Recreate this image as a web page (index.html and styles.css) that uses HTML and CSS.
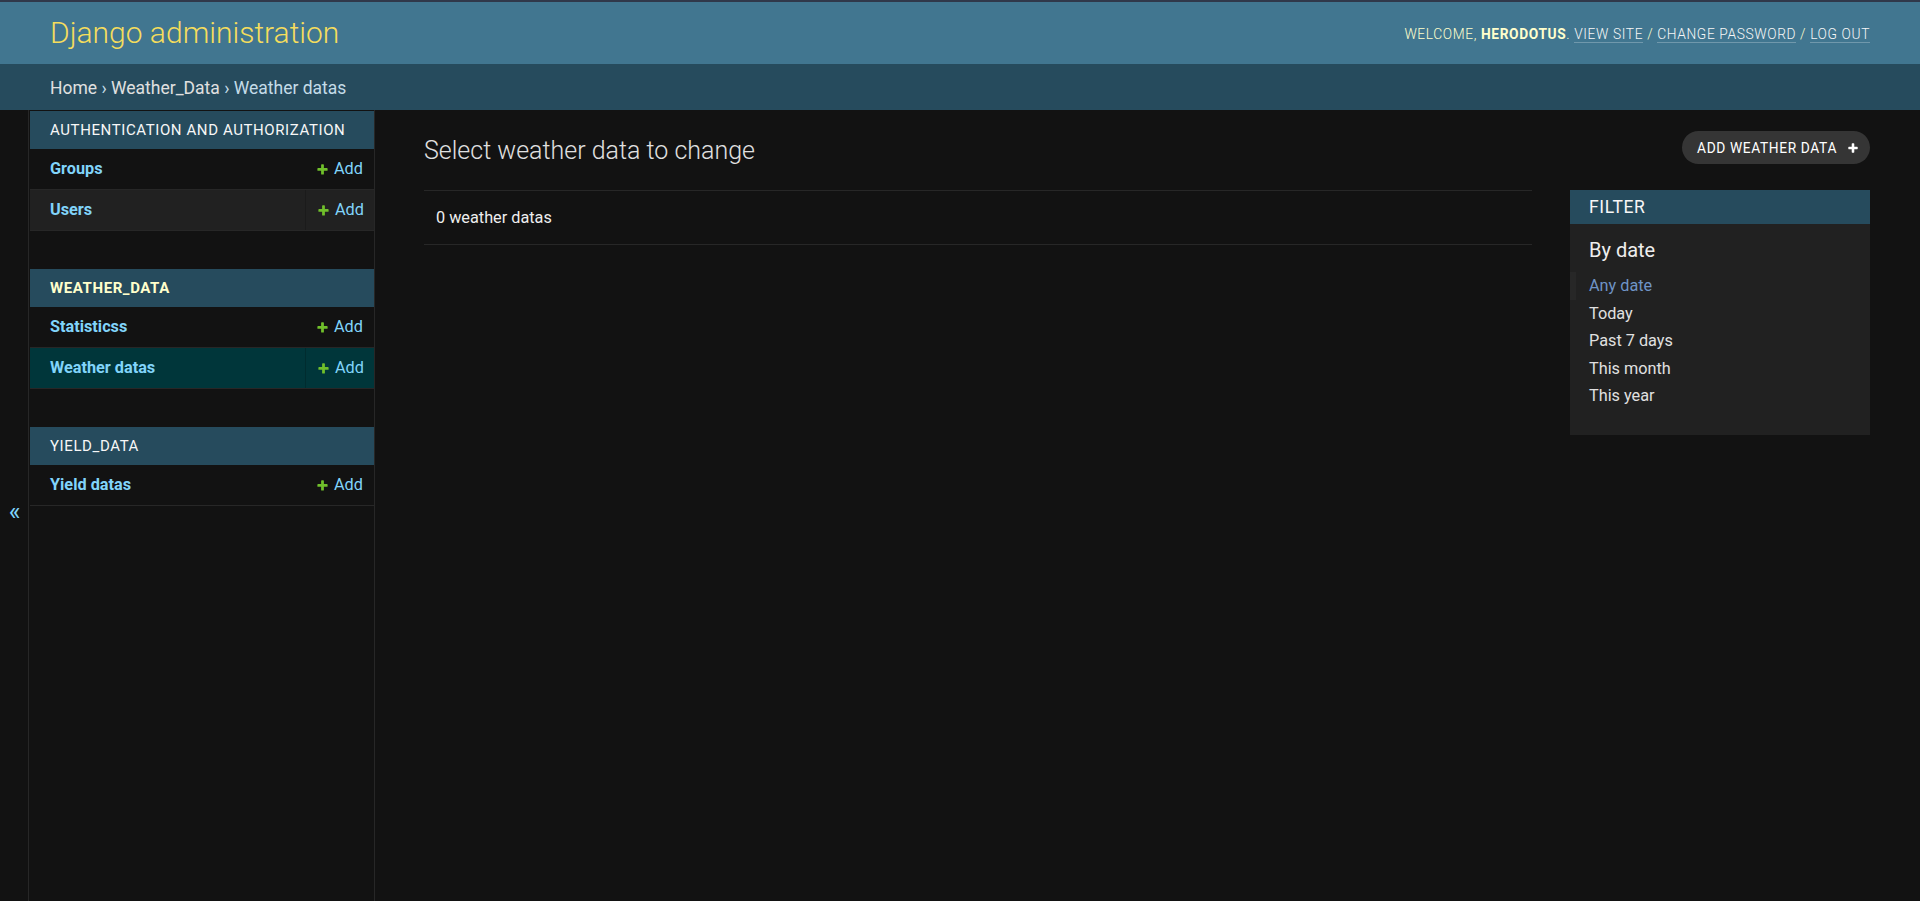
FILE: index.html
```html
<!DOCTYPE html>
<html lang="en">
<head>
<meta charset="utf-8">
<title>Select weather data to change | Django site admin</title>
<link rel="stylesheet" href="styles.css">
</head>
<body>
<div class="topstrip"></div>
<header class="header">
  <h1 class="branding">Django administration</h1>
  <div class="user-tools">
    Welcome, <strong>Herodotus</strong>. <a href="#">View site</a> / <a href="#">Change password</a> / <a href="#">Log out</a>
  </div>
</header>
<nav class="breadcrumbs">
  <a href="#">Home</a> › <a href="#">Weather_Data</a> › Weather datas
</nav>
<div class="main">
  <button class="toggle" type="button"><span>«</span></button>
  <aside class="sidebar">
    <div class="module">
      <div class="caption">Authentication and Authorization</div>
      <div class="row">
        <a class="model" href="#">Groups</a>
        <div class="addcell"><a class="addlink" href="#"><svg class="plus" viewBox="0 0 1792 1792"><path fill="#70bf2b" d="M1600 796v192q0 40-28 68t-68 28h-416v416q0 40-28 68t-68 28h-192q-40 0-68-28t-28-68v-416h-416q-40 0-68-28t-28-68v-192q0-40 28-68t68-28h416v-416q0-40 28-68t68-28h192q40 0 68 28t28 68v416h416q40 0 68 28t28 68z"/></svg>Add</a></div>
      </div>
      <div class="row row-alt">
        <a class="model" href="#">Users</a>
        <div class="addcell"><a class="addlink" href="#"><svg class="plus" viewBox="0 0 1792 1792"><path fill="#70bf2b" d="M1600 796v192q0 40-28 68t-68 28h-416v416q0 40-28 68t-68 28h-192q-40 0-68-28t-28-68v-416h-416q-40 0-68-28t-28-68v-192q0-40 28-68t68-28h416v-416q0-40 28-68t68-28h192q40 0 68 28t28 68v416h416q40 0 68 28t28 68z"/></svg>Add</a></div>
      </div>
    </div>
    <div class="module">
      <div class="caption caption-current">Weather_Data</div>
      <div class="row">
        <a class="model" href="#">Statisticss</a>
        <div class="addcell"><a class="addlink" href="#"><svg class="plus" viewBox="0 0 1792 1792"><path fill="#70bf2b" d="M1600 796v192q0 40-28 68t-68 28h-416v416q0 40-28 68t-68 28h-192q-40 0-68-28t-28-68v-416h-416q-40 0-68-28t-28-68v-192q0-40 28-68t68-28h416v-416q0-40 28-68t68-28h192q40 0 68 28t28 68v416h416q40 0 68 28t28 68z"/></svg>Add</a></div>
      </div>
      <div class="row row-current">
        <a class="model" href="#">Weather datas</a>
        <div class="addcell"><a class="addlink" href="#"><svg class="plus" viewBox="0 0 1792 1792"><path fill="#70bf2b" d="M1600 796v192q0 40-28 68t-68 28h-416v416q0 40-28 68t-68 28h-192q-40 0-68-28t-28-68v-416h-416q-40 0-68-28t-28-68v-192q0-40 28-68t68-28h416v-416q0-40 28-68t68-28h192q40 0 68 28t28 68v416h416q40 0 68 28t28 68z"/></svg>Add</a></div>
      </div>
    </div>
    <div class="module">
      <div class="caption">Yield_Data</div>
      <div class="row">
        <a class="model" href="#">Yield datas</a>
        <div class="addcell"><a class="addlink" href="#"><svg class="plus" viewBox="0 0 1792 1792"><path fill="#70bf2b" d="M1600 796v192q0 40-28 68t-68 28h-416v416q0 40-28 68t-68 28h-192q-40 0-68-28t-28-68v-416h-416q-40 0-68-28t-28-68v-192q0-40 28-68t68-28h416v-416q0-40 28-68t68-28h192q40 0 68 28t28 68v416h416q40 0 68 28t28 68z"/></svg>Add</a></div>
      </div>
    </div>
  </aside>
  <main class="content">
    <div class="title-row">
      <h1 class="title">Select weather data to change</h1>
      <a class="object-add" href="#">Add weather data<svg class="plus-white" viewBox="0 0 1792 1792"><path fill="#ffffff" d="M1600 796v192q0 40-28 68t-68 28h-416v416q0 40-28 68t-68 28h-192q-40 0-68-28t-28-68v-416h-416q-40 0-68-28t-28-68v-192q0-40 28-68t68-28h416v-416q0-40 28-68t68-28h192q40 0 68 28t28 68v416h416q40 0 68 28t28 68z"/></svg></a>
    </div>
    <div class="changelist">
      <div class="results">
        <p class="paginator">0 weather datas</p>
      </div>
      <div class="filter">
        <h2 class="filter-title">Filter</h2>
        <h3 class="filter-sub">By date</h3>
        <ul class="filter-list">
          <li class="selected"><a href="#">Any date</a></li>
          <li><a href="#">Today</a></li>
          <li><a href="#">Past 7 days</a></li>
          <li><a href="#">This month</a></li>
          <li><a href="#">This year</a></li>
        </ul>
      </div>
    </div>
  </main>
</div>
</body>
</html>
```

FILE: styles.css
```css
* { box-sizing: border-box; }
html, body { margin: 0; padding: 0; }
body {
  background: #121212;
  color: #eeeeee;
  font-family: Roboto, "Liberation Sans", Arial, sans-serif;
  font-size: 17.5px;
}
a { text-decoration: none; }

.topstrip { height: 2px; background: #30384a; }

.header {
  height: 62px;
  background: #417690;
  display: flex;
  align-items: center;
  justify-content: space-between;
  padding: 0 50px;
}
.branding {
  margin: 0;
  font-size: 30px;
  font-weight: 300;
  color: #f5dd5d;
  line-height: 36px;
}
.user-tools {
  font-size: 13.75px;
  font-weight: 300;
  letter-spacing: 0.625px;
  text-transform: uppercase;
  color: #ffffcc;
  line-height: 20px;
  padding-top: 2px;
}
.user-tools strong { font-weight: 700; }
.user-tools a {
  color: #f7f7f7;
  border-bottom: 1px solid rgba(255, 255, 255, 0.25);
}

.breadcrumbs {
  height: 46px;
  line-height: 44px;
  padding: 2px 50px 0;
  background: #264b5d;
  color: #c4dce8;
  font-size: 17.5px;
}
.breadcrumbs a { color: #e0e0e0; }

.main {
  display: flex;
  min-height: calc(100vh - 110px);
}

.toggle {
  flex: 0 0 29px;
  width: 29px;
  border: 0;
  border-right: 1px solid #272727;
  background: #121212;
  padding: 0;
  margin: 0;
  display: flex;
  align-items: center;
  justify-content: center;
  color: #81d4fa;
  font-family: Roboto, "Liberation Sans", Arial, sans-serif;
  font-size: 25px;
  line-height: 1;
}
.toggle span { display: block; margin-top: 11px; margin-left: 1px; }

.sidebar {
  flex: 0 0 346px;
  width: 346px;
  padding: 1px 0 0 1px;
  border-right: 1px solid #272727;
}
.module { margin-bottom: 38px; }
.caption {
  height: 38px;
  line-height: 38px;
  background: #264b5d;
  padding-left: 20px;
  font-size: 15px;
  font-weight: 400;
  letter-spacing: 0.6px;
  text-transform: uppercase;
  color: #f7f7f7;
}
.caption-current { font-weight: 700; color: #ffffcc; }
.row {
  height: 41px;
  display: flex;
  align-items: stretch;
  border-bottom: 1px solid #272727;
}
.row-alt { background: #212121; }
.row-current { background: #00363a; }
.model {
  flex: 1 1 auto;
  display: flex;
  align-items: center;
  padding-left: 20px;
  padding-bottom: 1px;
  color: #81d4fa;
  font-weight: 700;
  font-size: 16.25px;
}
.addcell {
  flex: 0 0 69px;
  display: flex;
  align-items: center;
  padding: 0 10px 1px;
}
.row-alt .addcell, .row-current .addcell { border-left: 1px solid rgba(0, 0, 0, 0.18); }
.addlink {
  display: flex;
  align-items: center;
  color: #81d4fa;
  font-size: 16.25px;
  font-weight: 400;
}
.plus {
  width: 13px;
  height: 13px;
  margin: 1px 5px 0 1px;
}

.content {
  flex: 1 1 auto;
  min-width: 0;
  padding: 21px 50px 25px 49px;
}
.title-row {
  display: flex;
  justify-content: space-between;
  align-items: flex-start;
  margin-bottom: 25px;
}
.title {
  margin: 0;
  padding-top: 5px;
  font-size: 25px;
  font-weight: 300;
  line-height: 29px;
  color: #e0e0e0;
}
.object-add {
  height: 33px;
  display: flex;
  align-items: center;
  padding: 0 11px 0 15px;
  background: #353535;
  border-radius: 17px;
  color: #ffffff;
  font-size: 13.75px;
  font-weight: 400;
  letter-spacing: 0.625px;
  text-transform: uppercase;
}
.plus-white { width: 12px; height: 12px; margin-left: 10px; }

.changelist { display: flex; align-items: flex-start; }
.results { flex: 1 1 auto; min-width: 0; }
.paginator {
  margin: 0;
  padding: 12.5px 12px;
  line-height: 27.5px;
  font-size: 16.25px;
  color: #eeeeee;
  border-top: 1px solid #272727;
  border-bottom: 1px solid #272727;
}

.filter {
  flex: 0 0 300px;
  width: 300px;
  margin-left: 38px;
  background: #212121;
  padding-bottom: 25px;
}
.filter-title {
  margin: 0;
  height: 34px;
  line-height: 34px;
  background: #264b5d;
  padding: 0 19px;
  font-size: 17.5px;
  font-weight: 400;
  letter-spacing: 0.625px;
  text-transform: uppercase;
  color: #f7f7f7;
}
.filter-sub {
  margin: 0 0 10px;
  padding: 14px 19px 0;
  font-size: 20px;
  font-weight: 400;
  line-height: 24px;
  color: #eeeeee;
}
.filter-list { list-style: none; margin: 0; padding: 0; }
.filter-list li {
  height: 27.5px;
  line-height: 27.5px;
  padding-left: 19px;
  font-size: 16.25px;
}
.filter-list li a { color: #e0e0e0; }
.filter-list li.selected {
  border-left: 6px solid #272727;
  padding-left: 13px;
}
.filter-list li.selected a { color: #6f94c6; }
```
